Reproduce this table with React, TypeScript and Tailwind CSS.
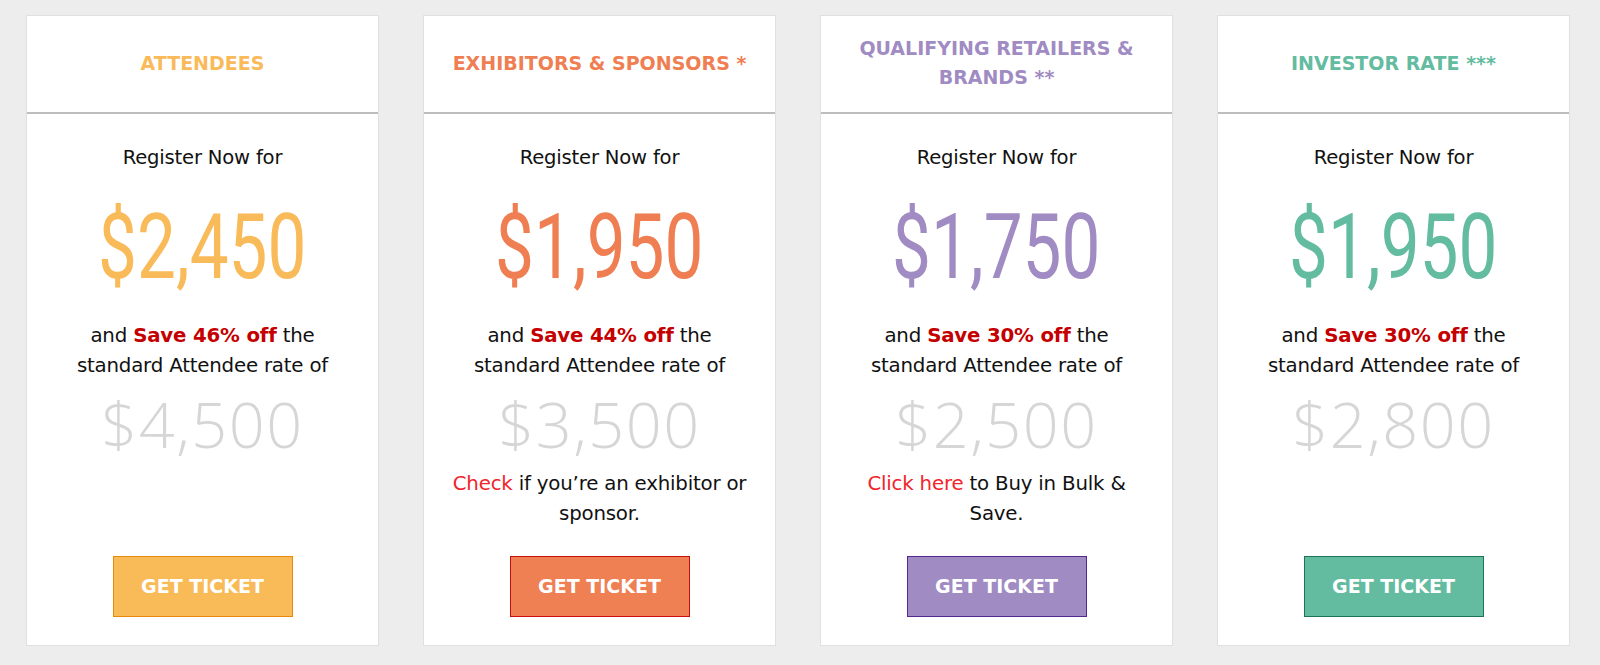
import * as React from "react";

interface Plan {
  title: React.ReactNode;
  price: string;
  save: string;
  was: string;
  note?: React.ReactNode;
  heading: string;
  button: string;
}

const plans: Plan[] = [
  {
    title: "ATTENDEES",
    price: "$2,450",
    save: "Save 46% off",
    was: "$4,500",
    heading: "text-[#f9bb5a]",
    button: "bg-[#f9bb58] border-[#e8890c]",
  },
  {
    title: "EXHIBITORS & SPONSORS *",
    price: "$1,950",
    save: "Save 44% off",
    was: "$3,500",
    note: (
      <>
        <span className="text-[#f2242b]">Check</span> if you’re an exhibitor or
        <br />
        sponsor.
      </>
    ),
    heading: "text-[#ef7f52]",
    button: "bg-[#ee8054] border-[#cc0d0d]",
  },
  {
    title: (
      <>
        QUALIFYING RETAILERS &amp;
        <br />
        BRANDS **
      </>
    ),
    price: "$1,750",
    save: "Save 30% off",
    was: "$2,500",
    note: (
      <>
        <span className="text-[#f2242b]">Click here</span> to Buy in Bulk &amp;
        <br />
        Save.
      </>
    ),
    heading: "text-[#a08bc2]",
    button: "bg-[#a08bc2] border-[#4f2a8c]",
  },
  {
    title: "INVESTOR RATE ***",
    price: "$1,950",
    save: "Save 30% off",
    was: "$2,800",
    heading: "text-[#63bba0]",
    button: "bg-[#63bba0] border-[#1d7558]",
  },
];

function PriceCard({ plan }: { plan: Plan }) {
  return (
    <div className="w-[353px] h-[631px] bg-white border border-[#e0e0e0] flex flex-col">
      {/* Header */}
      <div className="h-[98px] flex items-center justify-center px-5 border-b-2 border-[#bdbdbd]">
        <h3
          className={`text-center font-bold text-[19px] leading-[29px] -mt-[2px] ${plan.heading}`}
          style={{ fontFamily: '"DejaVu Sans", sans-serif' }}
        >
          {plan.title}
        </h3>
      </div>

      {/* Body */}
      <div
        className="flex-1 flex flex-col items-center text-center text-[#111] pt-[29px] pb-[28px]"
        style={{ fontFamily: '"DejaVu Sans", sans-serif' }}
      >
        <p className="text-[19.6px] leading-[30px] tracking-[-0.2px]">Register Now for</p>
        <div
          className={`mt-[24px] h-[102px] flex items-center justify-center text-[90px] leading-none scale-x-[0.77] ${plan.heading}`}
          style={{ fontFamily: "Roboto, sans-serif" }}
        >
          {plan.price}
        </div>
        <p className="mt-[22px] text-[19.8px] leading-[30px] tracking-[-0.2px]">
          and <span className="font-bold text-[#c50000]">{plan.save}</span> the
          <br />
          standard Attendee rate of
        </p>
        <div
          className="mt-[7px] text-[63px] leading-[72px] font-light text-[#d6d6d6] tracking-[1.5px]"
          style={{ fontFamily: '"Open Sans", sans-serif' }}
        >
          {plan.was}
        </div>
        {plan.note && (
          <p className="mt-[9px] text-[19.8px] leading-[30px] tracking-[-0.2px]">{plan.note}</p>
        )}
        <button
          className={`mt-auto w-[180px] h-[61px] border text-white font-bold text-[19px] ${plan.button}`}
          style={{ fontFamily: '"DejaVu Sans", sans-serif' }}
        >
          GET TICKET
        </button>
      </div>
    </div>
  );
}

export default function App() {
  return (
    <div className="w-[1600px] h-[665px] bg-[#ededed] pt-[15px] pl-[26px] flex gap-[44px]">
      {plans.map((p, i) => (
        <PriceCard key={i} plan={p} />
      ))}
    </div>
  );
}
